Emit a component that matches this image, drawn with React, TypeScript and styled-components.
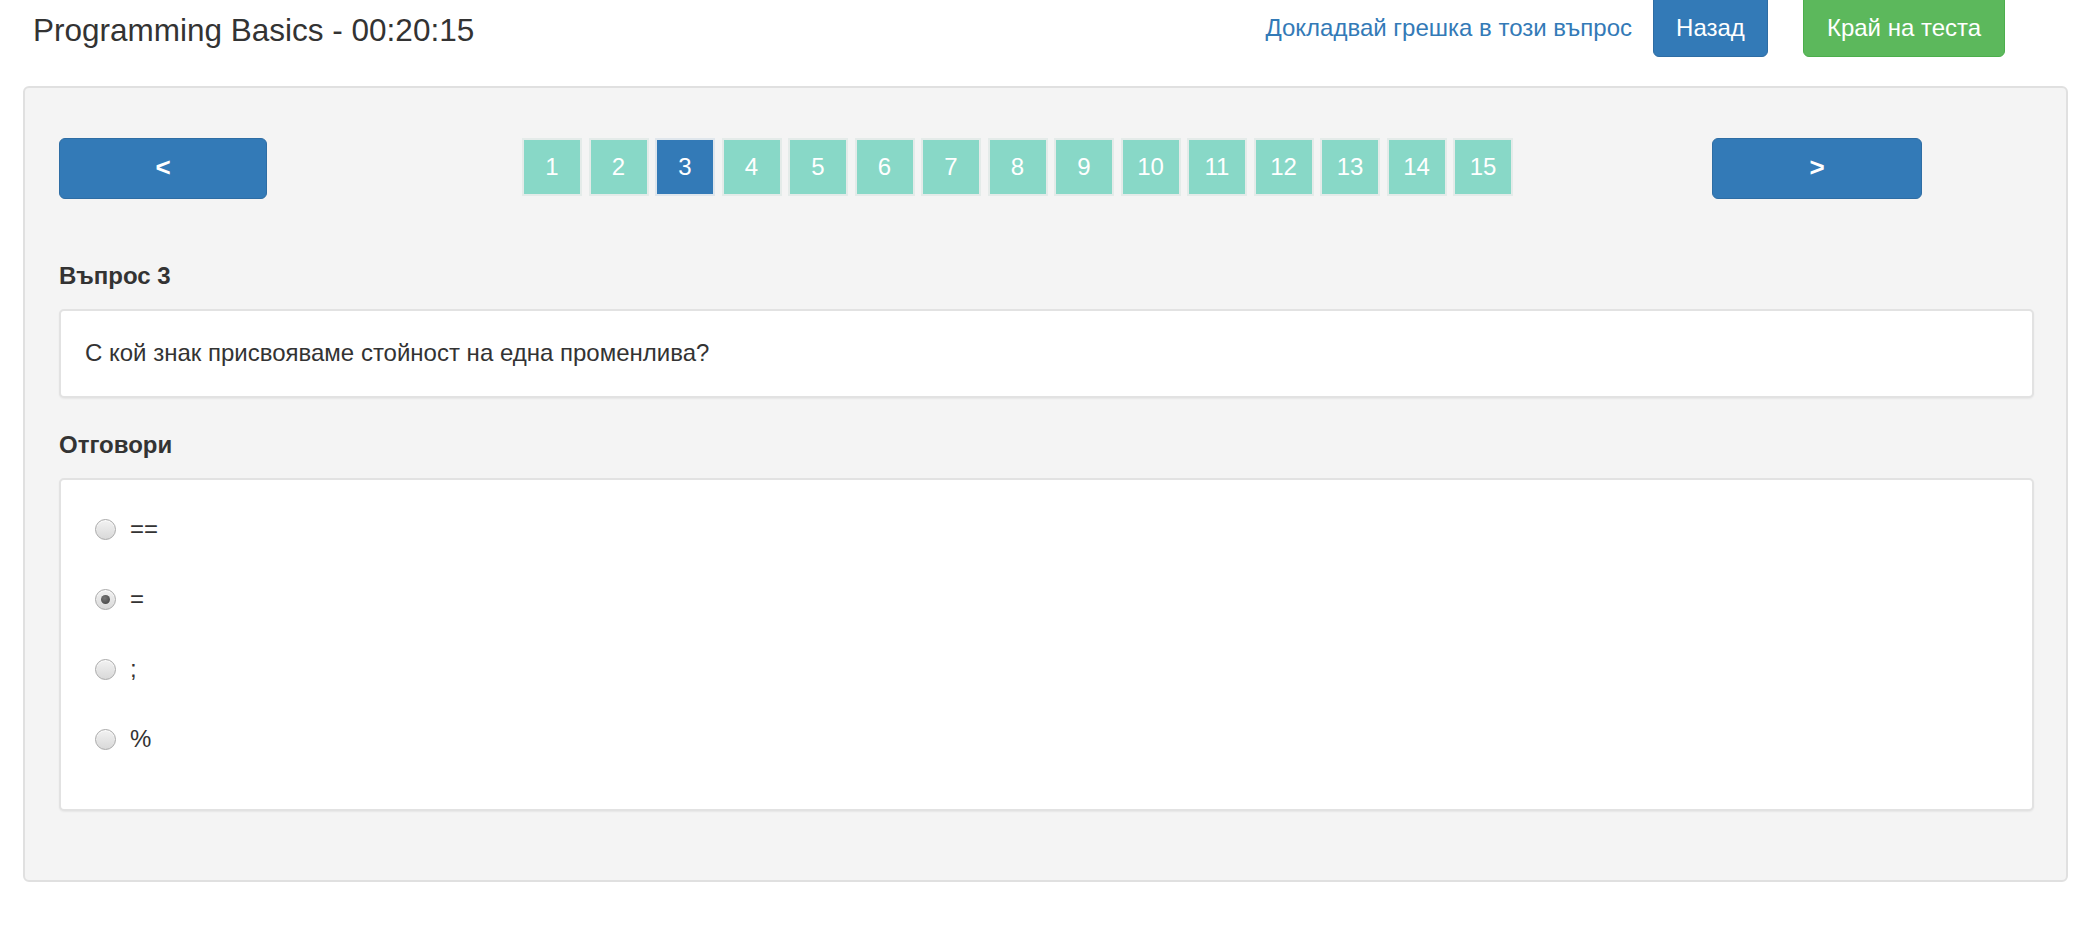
import React from "react";
import styled, { createGlobalStyle, css } from "styled-components";

const Global = createGlobalStyle`
  html, body { margin: 0; padding: 0; background: #ffffff; }
  body {
    font-family: "Liberation Sans", Arial, Helvetica, sans-serif;
    color: #333333;
    overflow: hidden;
  }
  * { box-sizing: border-box; }
`;

const Page = styled.div`
  width: 2094px;
  height: 930px;
`;

const Header = styled.header`
  display: flex;
  align-items: flex-start;
  height: 57px;
  padding: 0 89px 0 33px;
`;

const Title = styled.h1`
  margin: 0;
  padding-top: 12px;
  font-size: 31.5px;
  font-weight: 400;
  line-height: 37px;
  color: #333333;
  flex: 1;
`;

const Actions = styled.div`
  display: flex;
  align-items: flex-start;
  margin-top: -10px;
`;

const ReportLink = styled.a`
  font-size: 24px;
  line-height: 28.8px;
  color: #337ab7;
  text-decoration: none;
  padding-top: 24px;
  margin-right: 21px;
  cursor: pointer;
`;

const TopButton = styled.button<{ $variant: "primary" | "success"; $w: number }>`
  width: ${(p) => p.$w}px;
  height: 67px;
  padding: 23px 0 13px;
  font-family: inherit;
  font-size: 24px;
  line-height: 28.8px;
  color: #ffffff;
  border-radius: 6px;
  text-align: center;
  cursor: pointer;
  ${(p) =>
    p.$variant === "primary"
      ? css`
          background: #337ab7;
          border: 1px solid #2e6da4;
        `
      : css`
          background: #5cb85c;
          border: 1px solid #4cae4c;
          margin-left: 35px;
        `}
`;

const Panel = styled.main`
  margin: 29px 26px 0 23px;
  height: 796px;
  background: #f4f4f4;
  border: 2px solid #e0e0e0;
  border-radius: 6px;
  padding: 50px 32px 0 34px;
  display: flex;
  flex-direction: column;
`;

const NavRow = styled.div`
  display: flex;
  align-items: flex-start;
  height: 61px;
`;

const ArrowButton = styled.button<{ $w: number }>`
  width: ${(p) => p.$w}px;
  height: 61px;
  background: #337ab7;
  border: 1px solid #2e6da4;
  border-radius: 6px;
  color: #ffffff;
  font-family: inherit;
  font-size: 26px;
  font-weight: 700;
  cursor: pointer;
  display: flex;
  align-items: center;
  justify-content: center;
  padding: 0 0 2px;
`;

const NextButton = styled(ArrowButton)`
  margin-left: auto;
  margin-right: 112px;
`;

const Pager = styled.div`
  display: flex;
  gap: 6.5px;
  margin-left: 255px;
`;

const PageBox = styled.div<{ $active?: boolean }>`
  width: 60px;
  height: 58px;
  display: flex;
  align-items: center;
  justify-content: center;
  background: ${(p) => (p.$active ? "#337ab7" : "#88d8c7")};
  border: 2px solid ${(p) => (p.$active ? "#dfe6ec" : "#e4ebe9")};
  color: #ffffff;
  font-size: 24px;
  line-height: 1;
  cursor: pointer;
`;

const SectionTitle = styled.h3<{ $top: number }>`
  margin: ${(p) => p.$top}px 0 18px;
  font-size: 24px;
  font-weight: 700;
  line-height: 28.8px;
  color: #333333;
`;

const Card = styled.div`
  background: #ffffff;
  border: 2px solid #e2e2e2;
  border-radius: 5px;
  box-shadow: 0 1px 2px rgba(0, 0, 0, 0.06);
`;

const QuestionCard = styled(Card)`
  height: 89px;
  padding: 0 24px;
  display: flex;
  align-items: center;
  font-size: 24px;
  line-height: 28.8px;
`;

const AnswersCard = styled(Card)`
  height: 333px;
  padding: 15px 0 0 34px;
  display: flex;
  flex-direction: column;
`;

const AnswerRow = styled.label`
  height: 70px;
  display: flex;
  align-items: center;
  gap: 14px;
  font-size: 24px;
  line-height: 28.8px;
  color: #333333;
  cursor: pointer;
`;

const Radio = styled.span<{ $checked?: boolean }>`
  width: 21px;
  height: 21px;
  border-radius: 50%;
  border: 1px solid #a9a9a9;
  background: linear-gradient(#f2f2f2, #d9d9d9);
  box-shadow: inset 0 1px 1px rgba(255, 255, 255, 0.8);
  display: flex;
  align-items: center;
  justify-content: center;
  flex-shrink: 0;
  &::after {
    content: "";
    display: ${(p) => (p.$checked ? "block" : "none")};
    width: 9px;
    height: 9px;
    border-radius: 50%;
    background: radial-gradient(circle at 40% 35%, #777 0%, #4a4a4a 80%);
  }
`;

const pages = Array.from({ length: 15 }, (_, i) => i + 1);
const answers = [
  { text: "==", checked: false },
  { text: "=", checked: true },
  { text: ";", checked: false },
  { text: "%", checked: false },
];

export default function App() {
  return (
    <Page>
      <Global />
      <Header>
        <Title>Programming Basics - 00:20:15</Title>
        <Actions>
          <ReportLink>Докладвай грешка в този въпрос</ReportLink>
          <TopButton $variant="primary" $w={115}>
            Назад
          </TopButton>
          <TopButton $variant="success" $w={202}>
            Край на теста
          </TopButton>
        </Actions>
      </Header>
      <Panel>
        <NavRow>
          <ArrowButton $w={208}>&lt;</ArrowButton>
          <Pager>
            {pages.map((n) => (
              <PageBox key={n} $active={n === 3}>
                {n}
              </PageBox>
            ))}
          </Pager>
          <NextButton $w={210}>&gt;</NextButton>
        </NavRow>
        <SectionTitle $top={63}>Въпрос 3</SectionTitle>
        <QuestionCard>С кой знак присвояваме стойност на една променлива?</QuestionCard>
        <SectionTitle $top={33}>Отговори</SectionTitle>
        <AnswersCard>
          {answers.map((a) => (
            <AnswerRow key={a.text}>
              <Radio $checked={a.checked} />
              {a.text}
            </AnswerRow>
          ))}
        </AnswersCard>
      </Panel>
    </Page>
  );
}
